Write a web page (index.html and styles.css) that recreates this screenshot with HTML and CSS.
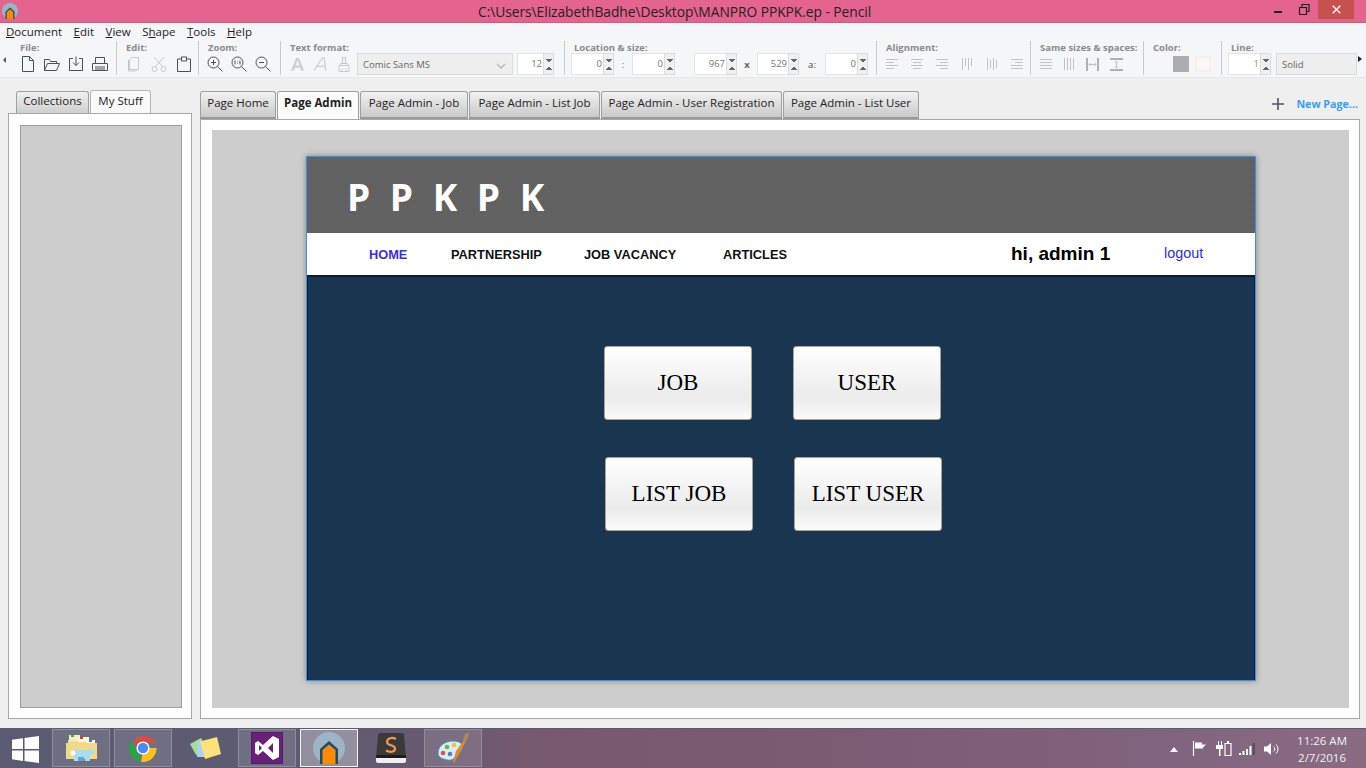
FILE: index.html
```html
<!DOCTYPE html>
<html lang="en">
<head>
<meta charset="utf-8">
<title>Pencil</title>
<link rel="stylesheet" href="styles.css">
</head>
<body>
<svg class="defs" width="0" height="0">
  <symbol id="house" viewBox="0 0 32 32">
    <circle cx="16" cy="16" r="16" fill="#9db4c4"/>
    <path d="M7 32V17L16 9l9 8v15z" fill="#1f4a66"/>
    <path d="M9.500 32V18L16 12.500 22.500 18V32z" fill="#ff8a00"/>
  </symbol>
</svg>
<header class="titlebar">
  <svg class="appicon" viewBox="0 0 32 32"><use href="#house"/></svg>
  <div class="title">C:\Users\ElizabethBadhe\Desktop\MANPRO PPKPK.ep - Pencil</div>
  <div class="winctl">
    <svg class="wbtn" viewBox="0 0 26 20"><rect x="8" y="11" width="8" height="2" fill="#222"/></svg>
    <svg class="wbtn" viewBox="0 0 26 20"><path d="M7.500 7.500h7v7h-7zM10 7V4.500h7v7h-2" fill="none" stroke="#222" stroke-width="1.200"/></svg>
    <div class="closebtn"><svg viewBox="0 0 12 12" width="9" height="9"><path d="M1 1l10 10M11 1L1 11" stroke="#fff" stroke-width="1.800"/></svg></div>
  </div>
</header>
<nav class="menubar">
  <span><u>D</u>ocument</span><span><u>E</u>dit</span><span><u>V</u>iew</span><span>S<u>h</u>ape</span><span><u>T</u>ools</span><span><u>H</u>elp</span>
</nav>
<section class="toolbar">
  <div class="scroll-l"></div>
  <div class="grp g-file">
    <div class="glabel">File:</div>
    <div class="gicons gap-file">
      <svg class="ti" viewBox="0 0 16 16"><path d="M2.500.5h7l4 4v11h-11zM9.500.5v4h4" class="s-dark"/></svg>
      <svg class="ti" viewBox="0 0 16 16"><path d="M.5 14.500V3.500h5l1 2h6v2M.5 14.500l3-7h12l-3 7z" class="s-dark"/></svg>
      <svg class="ti" viewBox="0 0 16 16"><path d="M5 2.500H1.500v12h13v-12H11M8 .5v9M5 6.500l3 3 3-3" class="s-dark"/></svg>
      <svg class="ti" viewBox="0 0 16 16"><path d="M3.500 7V1.500h9V7M.5 14.500V7.500h15v7zM3 11h10M3 13h10" class="s-dark"/></svg>
    </div>
  </div>
  <div class="grp g-edit">
    <div class="glabel">Edit:</div>
    <div class="gicons gap-edit">
      <svg class="ti" viewBox="0 0 16 16"><path d="M5.500 1.500h7v12h-9V4zM2.500 4v11h8" class="s-light"/></svg>
      <svg class="ti" viewBox="0 0 16 16"><path d="M3 1l9 10M13 1L4 11" class="s-light"/><circle cx="3.500" cy="13" r="2.500" class="s-light"/><circle cx="12.500" cy="13" r="2.500" class="s-light"/></svg>
      <svg class="ti" viewBox="0 0 16 16"><path d="M5 3H1.500v12.500h13V3H11M5.500 1h5v4h-5z" class="s-dark"/></svg>
    </div>
  </div>
  <div class="grp g-zoom">
    <div class="glabel">Zoom:</div>
    <div class="gicons gap-zoom">
      <svg class="ti" viewBox="0 0 16 16"><circle cx="6.500" cy="6.500" r="5.500" class="s-dark"/><path d="M10.500 10.500l5 5M4 6.500h5M6.500 4v5" class="s-dark"/></svg>
      <svg class="ti" viewBox="0 0 16 16"><circle cx="6.500" cy="6.500" r="5.500" class="s-dark"/><path d="M10.500 10.500l5 5M4 4.500v4M9 4.500v4M6.500 5v.5M6.500 7.500V8" class="s-dark"/></svg>
      <svg class="ti" viewBox="0 0 16 16"><circle cx="6.500" cy="6.500" r="5.500" class="s-dark"/><path d="M10.500 10.500l5 5M4 6.500h5" class="s-dark"/></svg>
    </div>
  </div>
  <div class="grp g-text">
    <div class="glabel">Text format:</div>
    <div class="gicons">
      <svg class="ti ti-a" viewBox="0 0 16 16"><path d="M1 15L6.500 1.500h3L15 15h-3.200l-1-3H5.200l-1 3zM6 9.500h4L8 4z" fill="#cfcfcf" fill-rule="evenodd"/></svg>
      <svg class="ti ti-a" viewBox="0 0 16 16"><path d="M1 15L10 1.500h2L13.500 15M4.500 10.500h8" fill="none" stroke="#cfcfcf" stroke-width="1.400"/></svg>
      <svg class="ti ti-brush" viewBox="0 0 12 16"><path d="M4.500 1.500h3v6h-3zM2.500 7.500h7v2h-7zM1 9.500h10v6H1zM4 15.500v-3M8 15.500v-3" class="s-light"/></svg>
      <div class="select sel-font">Comic Sans MS<svg class="chev" viewBox="0 0 10 6"><path d="M1 1l4 4 4-4" fill="none" stroke="#bbb" stroke-width="1.500"/></svg></div>
      <div class="spin sp-size"><b>12</b><i></i></div>
    </div>
  </div>
  <div class="grp g-loc">
    <div class="glabel">Location &amp; size:</div>
    <div class="gicons locrow">
      <div class="spin sp-a"><b>0</b><i></i></div><span class="sym sym-colon">:</span>
      <div class="spin sp-a"><b>0</b><i></i></div>
      <div class="spin sp-b"><b>967</b><i></i></div><span class="sym sym-x">x</span>
      <div class="spin sp-c"><b>529</b><i></i></div><span class="sym sym-ang">a:</span>
      <div class="spin sp-a"><b>0</b><i></i></div>
    </div>
  </div>
  <div class="grp g-align">
    <div class="glabel">Alignment:</div>
    <div class="gicons gap-align">
      <svg class="ti ti-s" viewBox="0 0 12 12"><path d="M0 1.500h12M0 4.500h8M0 7.500h12M0 10.500h8" class="s-line"/></svg>
      <svg class="ti ti-s" viewBox="0 0 12 12"><path d="M0 1.500h12M2 4.500h8M0 7.500h12M2 10.500h8" class="s-line"/></svg>
      <svg class="ti ti-s" viewBox="0 0 12 12"><path d="M0 1.500h12M4 4.500h8M0 7.500h12M4 10.500h8" class="s-line"/></svg>
      <svg class="ti ti-s" viewBox="0 0 12 12"><path d="M1.500 0v12M4.500 0v8M7.500 0v12M10.500 0v8" class="s-line"/></svg>
      <svg class="ti ti-s" viewBox="0 0 12 12"><path d="M1.500 0v12M4.500 2v8M7.500 0v12M10.500 2v8" class="s-line"/></svg>
      <svg class="ti ti-s" viewBox="0 0 12 12"><path d="M0 1.500h12M4 4.500h8M0 7.500h12M0 10.500h12" class="s-line"/></svg>
    </div>
  </div>
  <div class="grp g-same">
    <div class="glabel">Same sizes &amp; spaces:</div>
    <div class="gicons gap-same">
      <svg class="ti ti-s" viewBox="0 0 12 12"><path d="M0 1.500h12M0 4.500h12M0 7.500h12M0 10.500h12" class="s-line"/></svg>
      <svg class="ti ti-s" viewBox="0 0 12 12"><path d="M1.500 0v12M4.500 0v12M7.500 0v12M10.500 0v12" class="s-line"/></svg>
      <svg class="ti ti-m" viewBox="0 0 13 13"><path d="M1 0v13M12 0v13" class="s-bar"/><path d="M3 6.500h7M3 6.500L4.500 5M3 6.500L4.500 8M10 6.500L8.500 5M10 6.500L8.500 8" class="s-line"/></svg>
      <svg class="ti ti-m" viewBox="0 0 13 13"><path d="M0 1h13M0 12h13" class="s-bar"/><path d="M6.500 3v7M6.500 3L5 4.500M6.500 3L8 4.500M6.500 10L5 8.500M6.500 10L8 8.500" class="s-line"/></svg>
    </div>
  </div>
  <div class="grp g-color">
    <div class="glabel">Color:</div>
    <div class="gicons swatches"><div class="sw sw-fill"></div><div class="sw sw-line"></div></div>
  </div>
  <div class="grp g-line">
    <div class="glabel">Line:</div>
    <div class="gicons linerow">
      <div class="spin sp-a"><b class="orange">1</b><i></i></div>
      <div class="select sel-line">Solid</div>
    </div>
  </div>
  <div class="scroll-r"></div>
</section>
<main class="work">
  <aside class="side">
    <div class="sidetabs">
      <div class="tab tab-coll">Collections</div>
      <div class="tab tab-on tab-stuff">My Stuff</div>
    </div>
    <div class="sidepanel"><div class="sideinner"></div></div>
  </aside>
  <section class="editor">
    <div class="pagetabs">
      <div class="ptab pt1">Page Home</div>
      <div class="ptab pt2 ptab-on">Page Admin</div>
      <div class="ptab pt3">Page Admin - Job</div>
      <div class="ptab pt4">Page Admin - List Job</div>
      <div class="ptab pt5">Page Admin - User Registration</div>
      <div class="ptab pt6">Page Admin - List User</div>
      <div class="newpage">
        <svg class="plus" viewBox="0 0 12 12"><path d="M6 0v12M0 6h12" stroke="#4e5660" stroke-width="1.600"/></svg>
        <span>New Page...</span>
      </div>
    </div>
    <div class="canvasframe">
      <div class="canvas">
        <div class="page">
          <div class="site-head"><div class="logo">P P K P K</div></div>
          <div class="site-nav">
            <a class="n-home">HOME</a>
            <a class="n-part">PARTNERSHIP</a>
            <a class="n-job">JOB VACANCY</a>
            <a class="n-art">ARTICLES</a>
            <span class="hi">hi, admin 1</span>
            <a class="logout">logout</a>
          </div>
          <div class="site-body">
            <div class="btnrow row1"><div class="bigbtn">JOB</div><div class="bigbtn">USER</div></div>
            <div class="btnrow row2"><div class="bigbtn">LIST JOB</div><div class="bigbtn">LIST USER</div></div>
          </div>
        </div>
      </div>
    </div>
  </section>
</main>
<footer class="taskbar">
  <svg class="startlogo" viewBox="0 0 27 27"><path d="M0 3.800L11 2.200V13H0zM12.500 2L27 0v13H12.500zM0 14.500h11v10.500L0 23.300zM12.500 14.500H27V27l-14.500-2z" fill="#fff"/></svg>
  <div class="tb tb-open">
    <svg viewBox="0 0 32 32" class="tbi"><path d="M3 8h26v18H3z" fill="#f2dc8e"/><path d="M4 3h11v6H4z" fill="#f6eebc"/><path d="M6 3h3v2H6z" fill="#35b04a"/><path d="M13 5h11v5H13z" fill="#fff6d0"/><path d="M15 5h3v2h-3z" fill="#d83a2e"/><path d="M22 8h8v5h-8z" fill="#fff6d0"/><path d="M24 8h3v2h-3z" fill="#2b84d8"/><path d="M1 11h31v16H1z" fill="#f0d98a"/><path d="M8 18h21v4h-4v7h-5v-4h-6v4H9z" fill="#a8dcf0"/><path d="M13 25h6v4h-6z" fill="#5ea8d8"/><circle cx="8" cy="21" r="2.500" fill="#fff"/></svg>
  </div>
  <div class="tb tb-open">
    <svg viewBox="0 0 32 32" class="tbi tbi-c">
      <path d="M16 16L5 9.500A15 15 0 0 1 30 10.500H16z" fill="#dd4b3e"/>
      <path d="M16 16h14.500A15 15 0 0 1 14 30.900z" fill="#fbc116"/>
      <path d="M14 31A15 15 0 0 1 3.300 8L11 21z" fill="#2ba24c"/>
      <path d="M16 16h14A15 15 0 0 1 14 31l8-11z" fill="#fbc116"/>
      <circle cx="16" cy="16" r="7" fill="#fff"/><circle cx="16" cy="16" r="5.500" fill="#4a8af4"/>
    </svg>
  </div>
  <div class="tb">
    <svg viewBox="0 0 32 32" class="tbi"><path d="M1 12l11-6 6 10-11 7z" fill="#a8dc8c"/><path d="M8 9h13v16H8z" fill="#a8d4f4"/><path d="M11 9.500L28 5l4 17-16 5z" fill="#fbe27a"/></svg>
  </div>
  <div class="tb tb-open">
    <svg viewBox="0 0 32 32" class="tbi tbi-vs"><rect width="32" height="32" fill="#68217a" stroke="#3d1a55"/><path d="M22 4l6 3v18l-6 3-10-9-5 4-3-2V11l3-2 5 4zM8 13v6l3-3zM22 11l-5 5 5 5z" fill="#fff" fill-rule="evenodd"/></svg>
  </div>
  <div class="tb tb-active">
    <svg viewBox="0 0 32 32" class="tbi"><use href="#house"/></svg>
  </div>
  <div class="tb">
    <svg viewBox="0 0 32 32" class="tbi"><path d="M1 24h30v5a2 2 0 0 1-2 2H3a2 2 0 0 1-2-2z" fill="#f0f0f0"/><path d="M5 1h22a2 2 0 0 1 2 2l2 23H1L3 3a2 2 0 0 1 2-2z" fill="#3a3a3a"/><path d="M1.300 23h29.400l.3 3H1z" fill="#1c1c1c"/><path d="M21 7c-4-2-9-1-9 3s8 2.500 8 6.500-5 4-9 2" fill="none" stroke="#f2994a" stroke-width="2.200"/></svg>
  </div>
  <div class="tb tb-open">
    <svg viewBox="0 0 32 32" class="tbi"><path d="M1 21C1 13 9 9 16 9c8 0 11 4 9 8-2 5-5 3-6 6-1 4-5 6-9 5-5-1-9-3-9-7z" fill="#d9ecf7" stroke="#3f8ec2"/><circle cx="6" cy="21" r="2.300" fill="#d9534f"/><circle cx="10" cy="15" r="2.300" fill="#6cb33f"/><circle cx="17" cy="13" r="2.300" fill="#f0c330"/><circle cx="13" cy="22" r="2.300" fill="#5a7fc0"/><path d="M27 8l2 1-6 11-6 11-1-1 3-11z" fill="#e08a2c"/><path d="M26 8l2-6 4-1-1 5-3 4z" fill="#a68a6a"/></svg>
  </div>
  <div class="tray">
    <svg class="ty ty-up" viewBox="0 0 8 5"><path d="M0 5l4-5 4 5z" fill="#fff"/></svg>
    <svg class="ty ty-flag" viewBox="0 0 15 15"><path d="M1.500 0v15" stroke="#fff" stroke-width="1.200"/><path d="M3 1.500h7v2h4l-3 3 0 1H3z" fill="#fff"/></svg>
    <svg class="ty ty-batt" viewBox="0 0 16 15"><path d="M2 0v4M5 0v4M0 4h7v4H4.500v7H3V8H0z" fill="#fff"/><path d="M2 0h1v4H2zM5 0h1v4H5z" fill="#fff"/><path d="M9 2.500h6v12H9z" fill="none" stroke="#fff" stroke-width="1.200"/><path d="M11 0h2v2h-2z" fill="#fff"/></svg>
    <svg class="ty ty-sig" viewBox="0 0 16 12"><path d="M0 10h2v2H0zM3.500 8h2v4h-2zM7 6h2v6H7zM10.500 3h2v9h-2z" fill="#fff"/><path d="M13.500 0h2.500v12h-2.500z" fill="#555"/></svg>
    <svg class="ty ty-vol" viewBox="0 0 16 14"><path d="M0 4.500h3L7 1v12L3 9.500H0z" fill="#fff"/><path d="M9.500 4.500a3 3 0 0 1 0 5M12 2.500a6 6 0 0 1 0 9" fill="none" stroke="#fff"/></svg>
    <div class="clock"><div>11:26 AM</div><div>2/7/2016</div></div>
  </div>
</footer>
</body>
</html>
```
FILE: styles.css
```css
* { box-sizing: border-box; }
html, body { margin: 0; padding: 0; width: 1366px; height: 768px; overflow: hidden; }
body { display: flex; flex-direction: column; font-family: "Open Sans", "Noto Sans", sans-serif; background: #efefef; color: #222; }
.defs { position: absolute; }

.titlebar { height: 23px; flex: none; background: #e5638f; border-bottom: 1px solid #cf5a82; display: flex; align-items: flex-start; position: relative; }
.appicon { width: 16px; height: 16px; margin: 3px 0 0 2px; flex: none; }
.title { margin-left: 460px; font-size: 13.800px; line-height: 23px; color: #222; white-space: nowrap; letter-spacing: -.05px; }
.winctl { margin-left: auto; display: flex; margin-right: 12px; }
.wbtn { width: 26px; height: 20px; display: block; }
.closebtn { width: 36px; height: 19px; background: #c75050; display: flex; align-items: center; justify-content: center; }

.menubar { height: 18px; flex: none; background: #f5f6f8; display: flex; padding-left: 6px; font-size: 11.500px; line-height: 18px; color: #1c1c1c; gap: 11.500px; }

.toolbar { height: 37px; flex: none; background: #f5f6f8; border-bottom: 1px solid #e6e7e9; display: flex; position: relative; }
.scroll-l { width: 0; height: 0; position: absolute; left: 3px; top: 16px; border: 3px solid transparent; border-left-width: 0; border-right: 3px solid #555; }
.scroll-r { width: 0; height: 0; position: absolute; left: 1358px; top: 15px; border: 3px solid transparent; border-right-width: 0; border-left: 4px solid #222; }
.grp { height: 34px; border-right: 1px solid #c9c9c9; position: relative; flex: none; }
.g-file { width: 117px; padding-left: 20px; }
.g-edit { width: 82px; padding-left: 9px; }
.g-zoom { width: 82px; padding-left: 9px; }
.g-text { width: 284px; padding-left: 9px; }
.g-loc { width: 312px; padding-left: 9px; }
.g-align { width: 154px; padding-left: 9px; }
.g-same { width: 113px; padding-left: 9px; }
.g-color { width: 78px; padding-left: 9px; }
.g-line { width: 130px; padding-left: 9px; border-right: 0; }
.glabel { font-size: 9.500px; font-weight: 700; color: #8a8a8a; line-height: 13px; height: 12px; white-space: nowrap; }
.gicons { display: flex; align-items: center; height: 22px; margin-top: 0; }
.ti { width: 16px; height: 16px; flex: none; display: block; }
.ti-s { width: 12px; height: 12px; }
.ti-m { width: 13px; height: 13px; }
.ti-a { margin-right: 8px; width: 15px; }
.ti-brush { width: 12px; margin-right: 7px; margin-left: 2px; }
.gap-file { gap: 8px; }
.gap-edit { gap: 9px; }
.gap-zoom { gap: 8px; margin-left: -1px; }
.gap-align { gap: 13px; }
.gap-same { gap: 11px; }
.s-dark, .s-light { fill: none; stroke-width: 1; }
.s-dark { stroke: #4a5058; }
.s-light { stroke: #c8c8c8; }
.s-line { fill: none; stroke: #c2c2c2; stroke-width: 1; }
.s-bar { fill: none; stroke: #b0b0b0; stroke-width: 2; }

.select { height: 22px; background: #eeeeee; border: 1px solid #dcdcdc; font-size: 9.500px; color: #666; display: flex; align-items: center; padding-left: 5px; position: relative; flex: none; }
.sel-font { width: 156px; }
.sel-line { width: 81px; margin-left: 5px; }
.chev { width: 10px; height: 6px; position: absolute; right: 6px; top: 9px; }
.spin { height: 22px; display: flex; flex: none; }
.spin b { font-weight: 400; flex: 1; background: #fff; border: 1px solid #e4e4e4; border-right: 0; font-size: 9.500px; color: #777; text-align: right; line-height: 20px; padding-right: 1px; }
.spin b.orange { color: #a8885c; }
.spin i { width: 11px; height: 22px; border: 1px solid #dcdcdc; background-color: #f0f0f0;
  background-image: linear-gradient(45deg, transparent 50%, #666 50%), linear-gradient(-45deg, transparent 50%, #666 50%), linear-gradient(135deg, transparent 50%, #666 50%), linear-gradient(-135deg, transparent 50%, #666 50%);
  background-size: 4px 3px;
  background-position: 1px 5px, 5px 5px, 1px 13px, 5px 13px;
  background-repeat: no-repeat; }
.sp-size { width: 37px; margin-left: 4px; }
.sp-a { width: 43px; }
.sp-b { width: 43px; margin-left: 19px; }
.sp-c { width: 42px; }
.locrow { margin-left: -3px; }
.sym { font-size: 9.500px; color: #666; font-weight: 400; text-align: center; flex: none; }
.sym-colon { width: 18px; }
.sym-x { width: 20px; font-weight: 700; }
.sym-ang { width: 26px; color: #444; }
.swatches { gap: 6px; padding-left: 20px; }
.sw { width: 16px; height: 16px; }
.sw-fill { background: #adadad; }
.sw-line { border: 2px solid #fbeee2; background: #f8f8f8; }
.linerow { margin-left: -3px; }

.work { height: 650px; flex: none; display: flex; background: #efefef; }
.side { width: 200px; padding: 12px 8px 0; flex: none; }
.sidetabs { display: flex; height: 23px; padding-left: 8px; gap: 1px; align-items: flex-end; }
.tab { font-size: 11.500px; line-height: 18px; height: 22px; text-align: center; border: 1px solid #a0a0a0; border-bottom: 0; border-radius: 3px 3px 0 0; background: linear-gradient(#f0f0f0, #cfcfcf); color: #222; }
.tab-coll { width: 73px; }
.tab-stuff { width: 61px; height: 23px; background: #fafafa; line-height: 19px; border-color: #b5b5b5; }
.sidepanel { height: 606px; background: #fff; border: 1px solid #a8a8a8; padding: 11px; }
.sideinner { height: 583px; background: #cdcdcd; border: 1px solid #9d9d9d; width: 162px; }

.editor { flex: 1; padding-right: 6px; }
.pagetabs { display: flex; height: 41px; padding-top: 13px; gap: 1px; align-items: flex-end; position: relative; }
.ptab { font-size: 11.500px; height: 28px; line-height: 22px; text-align: center; border: 1px solid #a0a0a0; border-bottom: 2px solid #9a9a9a; border-radius: 3px 3px 0 0; background: linear-gradient(#f2f2f2, #c9c9c9); color: #222; white-space: nowrap; }
.pt1 { width: 76px; }
.pt2 { width: 82px; }
.pt3 { width: 108px; }
.pt4 { width: 131px; }
.pt5 { width: 181px; }
.pt6 { width: 136px; }
.ptab-on { background: #fbfbfb; font-weight: 700; border-bottom: 0; }
.newpage { margin-left: auto; display: flex; align-items: center; height: 27px; font-size: 10.700px; font-weight: 700; color: #3b9cf5; gap: 12px; margin-right: 2px; margin-bottom: 2px; }
.plus { width: 12px; height: 12px; }
.canvasframe { height: 600px; background: #fff; border: 1px solid #a8a8a8; padding: 10px 10px 10px 11px; }
.canvas { height: 578px; background: #cdcdcd; padding: 26px 0 0 94px; }
.page { width: 950px; height: 525px; border: 1px solid #3d8fe8; background: #1a3550; box-shadow: 0 0 6px rgba(0,0,0,.35); display: flex; flex-direction: column; }

.site-head { height: 76px; background-color: #616161; background-image: radial-gradient(circle at 2px 2px, #686868 0.6px, transparent 1px); background-size: 8px 8px; padding: 16px 0 0 40px; flex: none; }
.logo { font-family: "Open Sans", sans-serif; font-weight: 700; font-size: 37px; line-height: 47px; color: #fff; letter-spacing: 5px; white-space: nowrap; }
.site-nav { height: 44px; flex: none; background: #fff; border-bottom: 2px solid #0d1a35; display: flex; align-items: center; font-family: "Liberation Sans", Arial, sans-serif; position: relative; }
.site-nav a { font-size: 12.800px; font-weight: 700; color: #111; white-space: nowrap; }
.site-nav .n-home { color: #3a2fe8; margin-left: 62px; width: 82px; }
.n-part { width: 133px; }
.n-job { width: 139px; }
.n-art { width: 288px; }
.hi { font-size: 19px; font-weight: 700; color: #000; width: 153px; white-space: nowrap; }
.site-nav .logout { font-size: 14.400px; font-weight: 400; color: #2c2ce6; margin-top: -2px; }
.site-body { flex: 1; padding-top: 69px; border-left: 1px solid #0d1a35; border-right: 1px solid #0d1a35; }
.btnrow { display: flex; gap: 41px; }
.row1 { padding-left: 296px; }
.row2 { padding-left: 297px; margin-top: 37px; }
.bigbtn { width: 148px; height: 74px; border: 1px solid #a8a299; border-radius: 3px; background: linear-gradient(#ffffff 0%, #f2f2f2 45%, #ebebeb 70%, #fbfbfb 100%); font-family: "Liberation Serif", "Times New Roman", serif; font-size: 23px; line-height: 72px; text-align: center; color: #000; white-space: nowrap; }

.taskbar { height: 40px; flex: none; background: linear-gradient(90deg, #5a5b72 0%, #5f5b72 25%, #77596f 40%, #7b5b72 60%, #80637e 85%, #8a6c82 100%); border-top: 1px solid #5a5a70; display: flex; align-items: flex-start; }
.startlogo { width: 27px; height: 27px; margin: 7px 13px 0 12px; flex: none; }
.tb { width: 58px; height: 38px; margin-right: 4px; flex: none; border: 1px solid transparent; display: flex; align-items: center; justify-content: center; }
.tb-open { border-color: #8e8e9c; background: rgba(255,255,255,.12); }
.tb-active { border-color: #f4f4f4; background: rgba(255,255,255,.32); }
.tbi { width: 32px; height: 32px; display: block; }
.tbi-c { width: 30px; height: 30px; }
.tray { margin-left: auto; display: flex; align-items: center; height: 39px; color: #fff; position: relative; padding-right: 19px; }
.ty { display: block; flex: none; }
.ty-up { width: 8px; height: 5px; margin-right: 14px; margin-top: 2px; }
.ty-flag { width: 15px; height: 15px; margin-right: 9px; }
.ty-batt { width: 16px; height: 15px; margin-right: 7px; }
.ty-sig { width: 16px; height: 12px; margin-right: 9px; }
.ty-vol { width: 16px; height: 14px; margin-right: 17px; }
.clock { font-size: 11.500px; line-height: 17px; text-align: center; color: #f4f0f4; }
```
